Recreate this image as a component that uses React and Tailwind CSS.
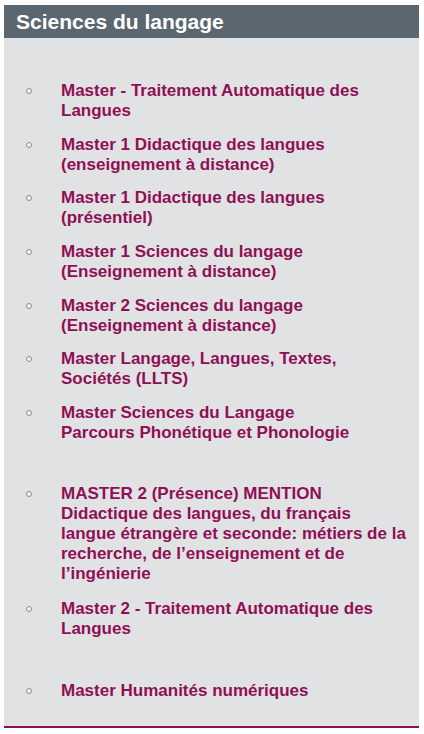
import React from "react";

const items = [
  { lines: ["Master - Traitement Automatique des", "Langues"] },
  { lines: ["Master 1 Didactique des langues", "(enseignement à distance)"] },
  { lines: ["Master 1 Didactique des langues", "(présentiel)"] },
  { lines: ["Master 1 Sciences du langage", "(Enseignement à distance)"] },
  { lines: ["Master 2 Sciences du langage", "(Enseignement à distance)"] },
  { lines: ["Master Langage, Langues, Textes,", "Sociétés (LLTS)"] },
  { lines: ["Master Sciences du Langage", "Parcours Phonétique et Phonologie"], mb: "mb-[27.5px]" },
  {
    lines: [
      "MASTER 2 (Présence) MENTION",
      "Didactique des langues, du français",
      "langue étrangère et seconde: métiers de la",
      "recherche, de l’enseignement et de",
      "l’ingénierie",
    ],
    mb: "mb-[1.5px]",
  },
  { lines: ["Master 2 - Traitement Automatique des", "Langues"], mb: "mb-[28.5px]" },
  { lines: ["Master Humanités numériques"] },
];

export default function App() {
  return (
    <div className="bg-white w-[424px] min-h-[734px] pt-[5px] px-[4px]" style={{ fontFamily: '"Liberation Sans", Arial, sans-serif' }}>
      <div className="w-[415px] bg-[#e1e2e4] border-b-2 border-[#8f1055]">
        <div className="bg-[#5b6770] h-[33px] flex items-center pl-[12px]">
          <h2 className="text-white font-bold text-[21px] leading-none">Sciences du langage</h2>
        </div>
        <ul className="flex flex-col gap-[13.67px] pt-[43px] pb-[25px]">
          {items.map((it, i) => (
            <li key={i} className={"flex items-start " + (it.mb || "")}>
              <div className="w-[57px] flex justify-start pl-[22px] pt-[7px] shrink-0">
                <span className="block w-[6px] h-[6px] rounded-full border border-[#8a8a8a] bg-[#f4f4f4]" />
              </div>
              <div className="text-[#8f1055] font-bold text-[17px] leading-[20px]">
                {it.lines.map((l, j) => (
                  <div key={j}>{l}</div>
                ))}
              </div>
            </li>
          ))}
        </ul>
      </div>
    </div>
  );
}
